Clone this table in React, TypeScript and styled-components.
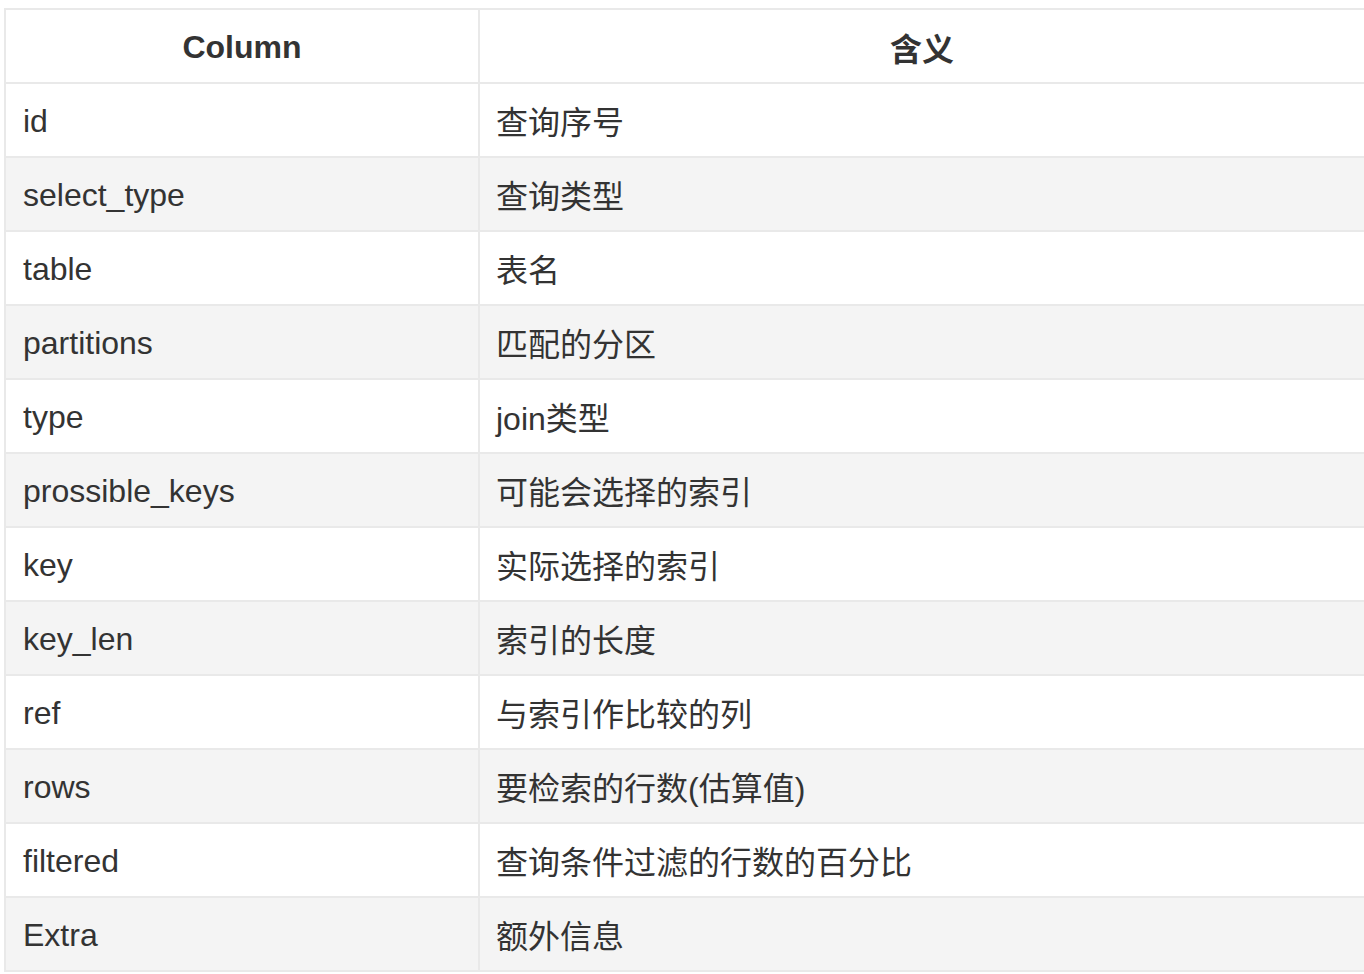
import React from "react";
import styled, { createGlobalStyle } from "styled-components";

const GlobalStyle = createGlobalStyle`
  html, body {
    margin: 0;
    padding: 0;
    background: #ffffff;
    overflow: hidden;
  }
  body {
    font-family: "Liberation Sans", "Noto Sans CJK SC", Arial, sans-serif;
    color: #333333;
  }
`;

const Page = styled.div`
  padding: 8px 0 0 4px;
  width: 1500px;
`;

const Table = styled.table`
  border-collapse: collapse;
  width: 1362px;
  font-family: "Liberation Sans", "Noto Sans CJK SC", Arial, sans-serif;
  font-size: 32px;
  color: #333333;
`;

const HeadCell = styled.th<{ $wide?: boolean }>`
  border: 2px solid #e9e9e9;
  height: 70px;
  padding: 2px 16px 0;
  text-align: center;
  font-weight: 700;
  background: #ffffff;
  width: ${(p) => (p.$wide ? "auto" : "440px")};
`;

const Row = styled.tr<{ $alt: boolean }>`
  background: ${(p) => (p.$alt ? "#f4f4f4" : "#ffffff")};
`;

const Cell = styled.td<{ $cjk?: boolean }>`
  border: 2px solid #e9e9e9;
  height: 70px;
  padding: ${(p) => (p.$cjk ? "0 17px 1px 16px" : "2px 17px 0")};
  text-align: left;
  vertical-align: middle;
  white-space: nowrap;
`;

const rows: [string, string][] = [
  ["id", "查询序号"],
  ["select_type", "查询类型"],
  ["table", "表名"],
  ["partitions", "匹配的分区"],
  ["type", "join类型"],
  ["prossible_keys", "可能会选择的索引"],
  ["key", "实际选择的索引"],
  ["key_len", "索引的长度"],
  ["ref", "与索引作比较的列"],
  ["rows", "要检索的行数(估算值)"],
  ["filtered", "查询条件过滤的行数的百分比"],
  ["Extra", "额外信息"],
];

export default function App() {
  return (
    <>
      <GlobalStyle />
      <Page>
        <Table>
          <thead>
            <tr>
              <HeadCell>Column</HeadCell>
              <HeadCell $wide>含义</HeadCell>
            </tr>
          </thead>
          <tbody>
            {rows.map(([c, m], i) => (
              <Row key={c} $alt={i % 2 === 1}>
                <Cell>{c}</Cell>
                <Cell $cjk>{m}</Cell>
              </Row>
            ))}
          </tbody>
        </Table>
      </Page>
    </>
  );
}
